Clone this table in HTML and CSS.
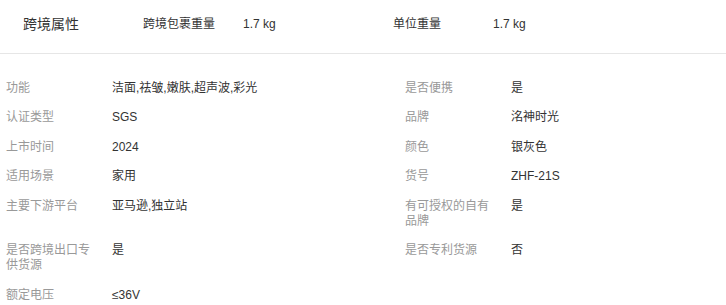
FILE: index.html
```html
<!DOCTYPE html>
<html lang="zh-CN">
<head>
<meta charset="utf-8">
<link rel="stylesheet" href="styles.css">
</head>
<body>
<div class="page">
  <div class="head">
    <div class="title">跨境属性</div>
    <div class="hpair"><span class="hlabel">跨境包裹重量</span><span class="hvalue">1.7 kg</span></div>
    <div class="hpair"><span class="hlabel">单位重量</span><span class="hvalue">1.7 kg</span></div>
  </div>
  <div class="attrs">
    <div class="lab">功能</div><div class="val">洁面,祛皱,嫩肤,超声波,彩光</div>
    <div class="lab">是否便携</div><div class="val">是</div>
    <div class="lab">认证类型</div><div class="val">SGS</div>
    <div class="lab">品牌</div><div class="val">洺神时光</div>
    <div class="lab">上市时间</div><div class="val">2024</div>
    <div class="lab">颜色</div><div class="val">银灰色</div>
    <div class="lab">适用场景</div><div class="val">家用</div>
    <div class="lab">货号</div><div class="val">ZHF-21S</div>
    <div class="lab">主要下游平台</div><div class="val">亚马逊,独立站</div>
    <div class="lab">有可授权的自有品牌</div><div class="val">是</div>
    <div class="lab">是否跨境出口专供货源</div><div class="val">是</div>
    <div class="lab">是否专利货源</div><div class="val">否</div>
    <div class="lab">额定电压</div><div class="val">≤36V</div>
    <div class="lab"></div><div class="val"></div>
  </div>
</div>
</body>
</html>
```

FILE: styles.css
```css
html, body {
  margin: 0;
  padding: 0;
  background: #ffffff;
}
body {
  font-family: "Liberation Sans", Arial, "Noto Sans CJK SC", sans-serif;
  color: #333333;
  font-size: 12px;
}
.page {
  width: 726px;
}
.head {
  display: flex;
  align-items: center;
  height: 54px;
  box-sizing: border-box;
  padding: 0 0 6px 23px;
  border-bottom: 1px solid #e6e6e6;
}
.title {
  width: 120px;
  font-size: 14px;
  line-height: 16px;
  color: #333333;
}
.hpair {
  display: flex;
  width: 250px;
  line-height: 16px;
}
.hlabel {
  width: 100px;
  color: #333333;
}
.hvalue {
  color: #333333;
}
.attrs {
  display: grid;
  grid-template-columns: 106px 293px 106px 1fr;
  padding: 19.25px 0 0 6px;
}
.lab, .val {
  padding: 7.25px 0;
  line-height: 15px;
}
.lab {
  color: #999999;
  padding-right: 16px;
}
.val {
  color: #333333;
}
```
